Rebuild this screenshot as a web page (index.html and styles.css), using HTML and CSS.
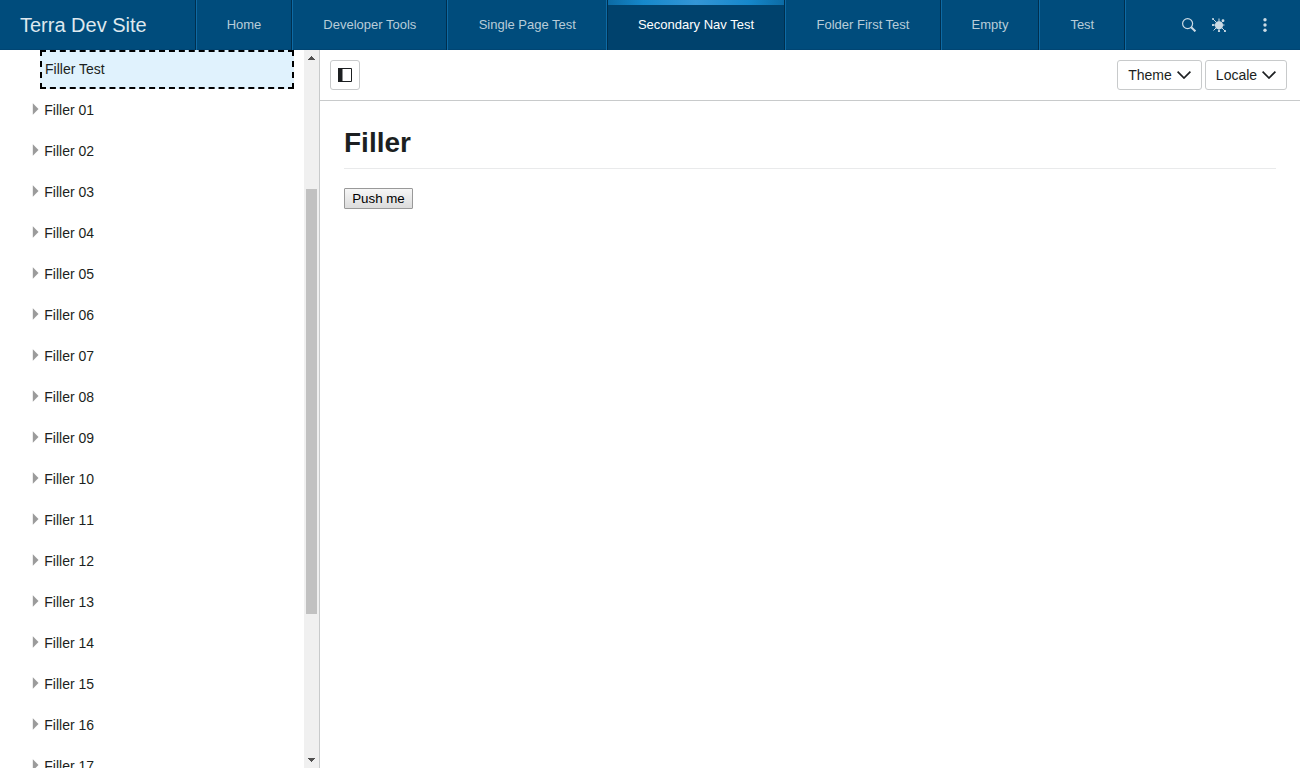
FILE: index.html
```html
<!DOCTYPE html>
<html lang="en">
<head>
<meta charset="utf-8">
<title>Terra Dev Site</title>
<link rel="stylesheet" href="styles.css">
</head>
<body>
<header class="header">
  <div class="brand">Terra Dev Site</div>
  <nav class="tabs">
    <a class="tab" style="width:96px">Home</a>
    <a class="tab nudge" style="width:155px">Developer Tools</a>
    <a class="tab nudge" style="width:160px">Single Page Test</a>
    <a class="tab selected" style="width:178px">Secondary Nav Test</a>
    <a class="tab" style="width:156px">Folder First Test</a>
    <a class="tab" style="width:98px">Empty</a>
    <a class="tab nudge" style="width:86px">Test</a>
  </nav>
  <div class="tools">
    <svg class="search" width="14" height="14" viewBox="0 0 14 14"><circle cx="5.6" cy="5.6" r="5" fill="none" stroke="#ccdbe5" stroke-width="1.2"/><path d="M9.2 9.2 13.4 13.4" stroke="#ccdbe5" stroke-width="2"/></svg>
    <svg class="bug" width="14" height="14" viewBox="0 0 14 14"><circle cx="7" cy="7.200" r="4" fill="#ccdbe5"/><path d="M7 .5V4M7 10V14M0 7H4M10 7H12.500M1 1 4 4M11 3 9.500 4.500M1.500 12.500 4 10M10 10 13 13" stroke="#ccdbe5"/><g fill="#ccdbe5"><circle cx="11" cy="2.700" r="1.400"/><circle cx="1" cy="1" r="1"/><circle cx="13" cy="13" r="1.100"/><circle cx="1" cy="7" r="1.100"/><circle cx="7" cy="13" r="1.100"/></g></svg>
    <svg class="dots" width="4" height="14" viewBox="0 0 4 14" fill="#ccdbe5"><circle cx="2" cy="1.700" r="1.700"/><circle cx="2" cy="7" r="1.700"/><circle cx="2" cy="12.300" r="1.700"/></svg>
  </div>
</header>
<div class="body">
  <aside class="side">
    <div class="tree" id="tree"><div class="current">Filler Test</div></div>
    <div class="scrollbar">
      <svg class="arrow" width="7" height="4" viewBox="0 0 7 4" shape-rendering="crispEdges"><path d="M3 0h1v1h1v1h1v1h1v1H0V3h1V2h1V1h1z" fill="#505050"/></svg>
      <div class="thumb"></div>
      <svg class="arrow" width="7" height="4" viewBox="0 0 7 4" shape-rendering="crispEdges"><path d="M0 0h7v1H6v1H5v1H4v1H3V3H2V2H1V1H0z" fill="#505050"/></svg>
    </div>
  </aside>
  <main class="main">
    <div class="toolbar">
      <button class="btn toggle"><svg width="14" height="14" viewBox="0 0 14 14"><path d="M.5.5h13v13H.5z" fill="none" stroke="#1c1f21"/><path d="M0 0h4v14H0z" fill="#1c1f21"/><path d="M4 1h1v12H4z" fill="#8e8f90"/></svg></button>
      <div class="menus">
        <button class="btn theme">Theme<svg width="14" height="8" viewBox="0 0 14 8"><path d="M.6.6 7 7 13.400.6" fill="none" stroke="#1c1f21" stroke-width="1.700"/></svg></button>
        <button class="btn locale">Locale<svg width="14" height="8" viewBox="0 0 14 8"><path d="M.6.6 7 7 13.400.6" fill="none" stroke="#1c1f21" stroke-width="1.700"/></svg></button>
      </div>
    </div>
    <section class="content">
      <h1>Filler</h1>
      <button class="push">Push me</button>
    </section>
  </main>
</div>
<script src="tree.js"></script>
</body>
</html>
```
FILE: styles.css
```css
* { box-sizing: border-box; }
body { margin: 0; height: 768px; overflow: hidden; font: 14px/20px "Liberation Sans", Arial, sans-serif; color: #1c1f21; background: #fff; }
button { font-family: inherit; color: inherit; }
.header { height: 50px; display: flex; background: #004c7c; box-shadow: inset 0 -1px #004573; }
.brand { width: 196px; padding-left: 20px; border-right: 1px solid #002f4e; color: #dee8ee; font-size: 20px; line-height: 50px; }
.tabs { display: flex; border-right: 1px solid #0e6aa4; }
.tab { border-left: 1px solid #0e6aa4; border-right: 1px solid #002f4e; text-align: center; font-size: 13px; line-height: 49px; color: #b8ccd9; white-space: nowrap; }
.tab.nudge { padding-left: 0.6px; }
.tab.selected { border-left-color: #002f4e; box-shadow: -1px 0 #0e6aa4; color: #fff; background: linear-gradient(90deg, #0c6ba5 0, #1688cb 20%, #3496d6 50%, #1688cb 80%, #0c6ba5 100%) 0 0 / 100% 5px no-repeat #00426d; }
.tools { flex: 1; display: flex; justify-content: flex-end; align-items: center; padding-right: 33px; }
.bug { margin: 0 37px 0 16px; }
.body { height: 718px; display: flex; }
.side { width: 320px; display: flex; border-right: 1px solid #c8cacb; }
.tree { width: 304px; overflow: hidden; }
.current { margin: 0 10px 0 40px; height: 39px; border: 2px dashed #000; background: #e0f2fd; padding-left: 3px; line-height: 35px; }
.item { height: 41px; display: flex; align-items: center; padding-left: 32px; font-kerning: none; }
.item svg { margin: 0 5.3px 1px 0; flex: none; }
.scrollbar { width: 15px; background: #f0f0f0; display: flex; flex-direction: column; padding: 6px 2px; }
.arrow { margin-left: 2px; flex: none; }
.thumb { height: 425px; width: 11px; margin: 129px 0 auto; background: #c1c1c1; }
.main { flex: 1; }
.toolbar { height: 51px; border-bottom: 1px solid #c8cacb; display: flex; justify-content: space-between; padding: 10px 13px 0 10px; }
.btn { height: 30px; background: #fff; border: 1px solid #c8cacb; border-radius: 3px; padding: 0; display: flex; align-items: center; justify-content: center; gap: 5px; font-size: 14px; }
.toggle { width: 30px; }
.menus { display: flex; gap: 3px; }
.theme { width: 85px; }
.locale { width: 82px; }
.content { padding: 20px 24px; }
h1 { margin: 0 0 19px; height: 49px; font-size: 28px; line-height: 44px; border-bottom: 1px solid #e9eaeb; margin-bottom: 19px; height: 48px; }
.push { display: block; width: 69px; height: 21px; padding: 0; border: 1px solid #999; border-radius: 1px; background: linear-gradient(#f6f6f6, #dcdcdc); color: #000; font-size: 13.333px; line-height: 19px; }
```
FILE: tree.js
```js
const tree = document.getElementById('tree');
for (let i = 1; i <= 17; i++) {
  const item = document.createElement('div');
  item.className = 'item';
  item.innerHTML = '<svg width="7" height="12" viewBox="0 0 7 12"><path d="M.8.3 6.500 6 .8 11.700z" fill="#9b9b9b"/></svg>Filler ' + String(i).padStart(2, '0');
  tree.append(item);
}
```
